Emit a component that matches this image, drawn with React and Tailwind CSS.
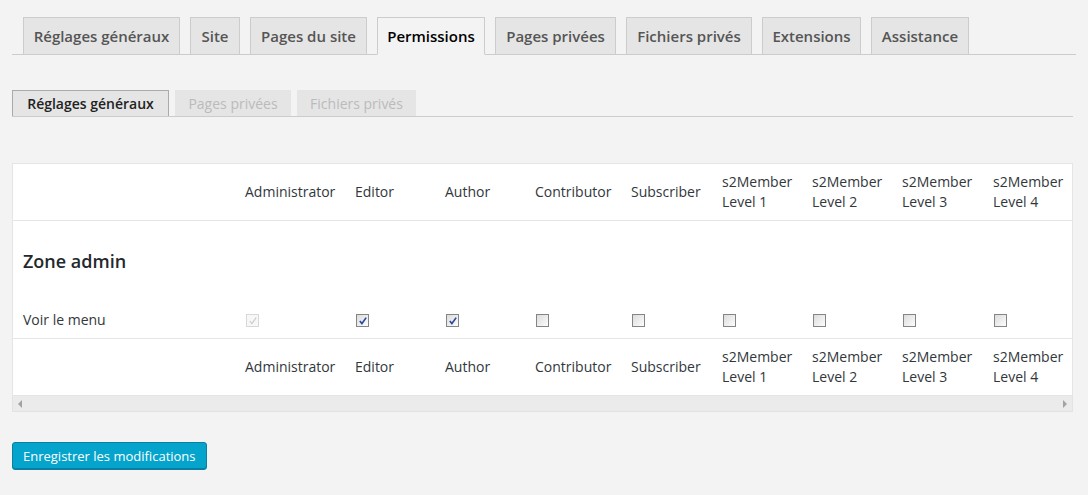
import React from 'react';

const topTabs = [
    { label: 'Réglages généraux', w: 'w-[157px]' },
    { label: 'Site', w: 'w-[50px]' },
    { label: 'Pages du site', w: 'w-[117px]' },
    { label: 'Permissions', w: 'w-[108px]', active: true },
    { label: 'Pages privées', w: 'w-[121px]' },
    { label: 'Fichiers privés', w: 'w-[126px]' },
    { label: 'Extensions', w: 'w-[99px]' },
    { label: 'Assistance', w: 'w-[98px]' },
];

const roles = [
    ['Administrator'],
    ['Editor'],
    ['Author'],
    ['Contributor'],
    ['Subscriber'],
    ['s2Member', 'Level 1'],
    ['s2Member', 'Level 2'],
    ['s2Member', 'Level 3'],
    ['s2Member', 'Level 4'],
];

const cols = 'grid grid-cols-[222px_110px_90px_90px_96px_91px_90px_90px_91px_90px]';

const Checkbox = ({ checked, disabled }) => (
    <span
        className={`ml-px mt-[4px] flex h-[13px] w-[13px] items-center justify-center border ${
            disabled ? 'border-[#d8d8d8] bg-[#f7f7f7]' : 'border-[#858585] bg-gradient-to-br from-[#dcdcdc] to-[#fdfdfd]'
        }`}
    >
        {checked && (
            <svg viewBox="0 0 11 11" className="h-[10px] w-[10px]">
                <path
                    d="M2 5.5 L4.3 8.3 L9 1.8"
                    fill="none"
                    stroke={disabled ? '#c8c8c8' : '#2b4a9b'}
                    strokeWidth={disabled ? 1.2 : 1.8}
                />
            </svg>
        )}
    </span>
);

const RoleRow = () => (
    <div className={`${cols} py-2 text-[14px] leading-5 text-[#32373c]`}>
        <div />
        {roles.map((r, i) => (
            <div key={i} className="flex flex-col justify-center pl-[10px]">
                {r.map((line) => (
                    <span key={line} className="whitespace-nowrap">{line}</span>
                ))}
            </div>
        ))}
    </div>
);

const App = () => {
    const checks = [
        { checked: true, disabled: true },
        { checked: true },
        { checked: true },
        {}, {}, {}, {}, {}, {},
    ];

    return (
        <div className="min-h-[495px] bg-[#f3f3f3] px-3 pt-[17px] font-['Open_Sans',sans-serif]">
            {/* Main tabs */}
            <div className="flex gap-[10px] border-b border-[#cccccc] pl-[11px]">
                {topTabs.map((t) => (
                    <div
                        key={t.label}
                        className={`${t.w} -mb-px flex h-[38px] items-center justify-center border border-[#cccccc] text-[15px] font-semibold ${
                            t.active ? 'border-b-[#f3f3f3] bg-[#f3f3f3] text-black' : 'bg-[#e5e5e5] text-[#555555]'
                        }`}
                    >
                        {t.label}
                    </div>
                ))}
            </div>

            {/* Sub tabs */}
            <div className="mt-[35px] mr-[3px] flex gap-[6px] border-b border-[#cccccc]">
                <div className="flex h-[26px] w-[157px] items-center justify-center border border-b-0 border-[#aaaaaa] bg-[#e5e5e5] text-[14px] font-semibold text-[#222222]">
                    Réglages généraux
                </div>
                <div className="flex h-[26px] w-[116px] items-center justify-center border border-b-0 border-[#e5e5e5] bg-[#e5e5e5] text-[14px] text-[#bbbbbb]">
                    Pages privées
                </div>
                <div className="flex h-[26px] w-[119px] items-center justify-center border border-b-0 border-[#e5e5e5] bg-[#e5e5e5] text-[14px] text-[#bbbbbb]">
                    Fichiers privés
                </div>
            </div>

            {/* Permissions table */}
            <div className="mt-[46px] mr-[3px]">
                <div className="overflow-hidden border border-[#e5e5e5] bg-white">
                    <RoleRow />
                    <div className="border-t border-[#e5e5e5] pt-[28px] pb-2">
                        <h3 className="pl-[10px] text-[18px] font-semibold leading-6 text-[#23282d]">Zone admin</h3>
                        <div className={`${cols} mt-[37px] text-[14px] leading-5 text-[#32373c]`}>
                            <div className="pl-[10px]">Voir le menu</div>
                            {checks.map((c, i) => (
                                <div key={i} className="pl-[10px]">
                                    <Checkbox {...c} />
                                </div>
                            ))}
                        </div>
                    </div>
                    <div className="border-t border-[#e5e5e5]">
                        <RoleRow />
                    </div>
                </div>
                {/* horizontal scrollbar */}
                <div className="flex h-4 items-center justify-between border border-t-0 border-[#e3e3e3] bg-[#ebebeb] px-[5px]">
                    <span className="h-0 w-0 border-y-[4px] border-r-[4px] border-y-transparent border-r-[#a3a3a3]" />
                    <span className="h-0 w-0 border-y-[4px] border-l-[4px] border-y-transparent border-l-[#a3a3a3]" />
                </div>
            </div>

            <button className="mt-[30px] h-[28px] rounded-[3px] border border-[#0a7fa3] bg-[#04a4cc] px-[10px] pt-[2px] text-[13px] text-white shadow-[inset_0_-1px_0_#0780a5]">
                Enregistrer les modifications
            </button>
        </div>
    );
};

export default App;
